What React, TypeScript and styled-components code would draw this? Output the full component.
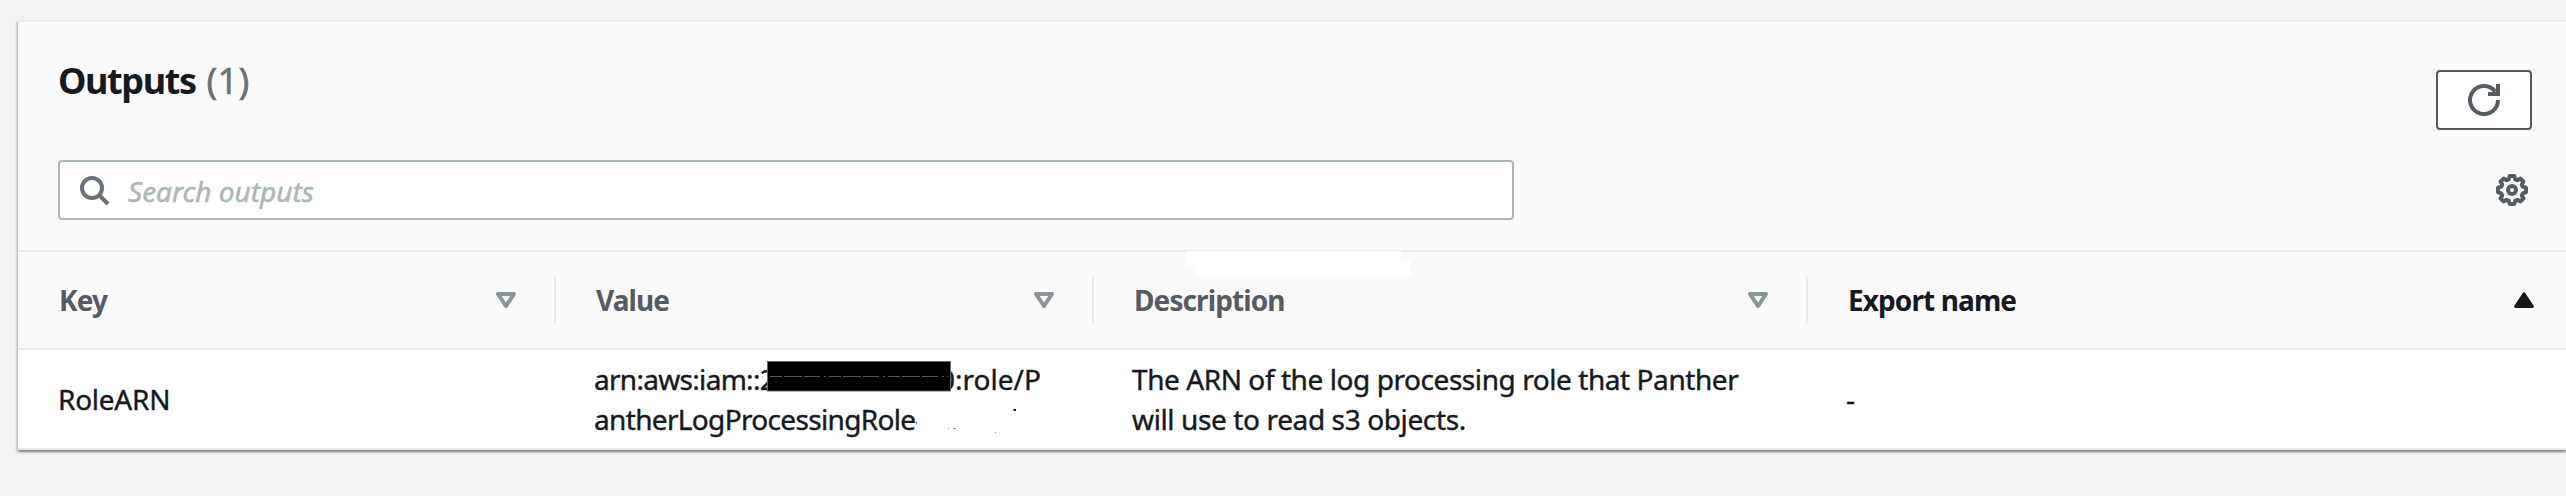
import React from 'react';
import styled, { createGlobalStyle } from 'styled-components';

const GlobalStyle = createGlobalStyle`
  * { box-sizing: border-box; }
  body {
    margin: 0;
    background: #f1f3f3;
    color: #16191f;
    font-family: 'Noto Sans', sans-serif;
    font-size: 28px;
    line-height: 40px;
    overflow: hidden;
  }
`;

const Page = styled.main`
  height: 496px;
  padding: 20px 0 0 18px;
  background: #f1f3f3;
  overflow: hidden;
`;

const Panel = styled.section`
  border-top: 2px solid #eaeded;
  background: #fff;
  box-shadow:
    0 2px 2px 0 rgba(0, 28, 36, 0.3),
    2px 2px 2px 0 rgba(0, 28, 36, 0.15),
    -2px 2px 2px 0 rgba(0, 28, 36, 0.15);
`;

const PanelHeader = styled.header`
  height: 230px;
  padding: 36px 34px 30px 40px;
  background: #fafafa;
  border-bottom: 2px solid #ebebeb;
`;

const TitleRow = styled.div`
  display: flex;
  justify-content: space-between;
  height: 102px;
`;

const Title = styled.h2`
  margin: 0;
  padding-top: 1px;
  font-size: 36px;
  line-height: 44px;
  font-weight: 700;
  letter-spacing: -1.4px;
`;

const Count = styled.span`
  font-weight: 400;
  letter-spacing: 0.3px;
  color: #687078;
  margin-left: 3px;
  -webkit-text-stroke: 0.5px;
`;

const RefreshButton = styled.button`
  display: flex;
  align-items: center;
  justify-content: center;
  width: 96px;
  height: 60px;
  margin-top: 12px;
  padding: 0;
  border: 2px solid #545b64;
  border-radius: 4px;
  background: #fff;
`;

const ToolRow = styled.div`
  display: flex;
  align-items: center;
  justify-content: space-between;
  height: 60px;
  padding-right: 4px;
`;

const SearchBox = styled.label`
  display: flex;
  align-items: center;
  width: 1456px;
  height: 60px;
  padding-left: 20px;
  gap: 16px;
  border: 2px solid #aab7b8;
  border-radius: 4px;
  background: #fff;
`;

const Placeholder = styled.span`
  color: #aab7b8;
  font-style: italic;
  padding-top: 1px;
  -webkit-text-stroke: 0.5px;
`;

const Grid = styled.div`
  display: grid;
  grid-template-columns: 538px 538px 714px 1fr;
`;

const HeadRow = styled(Grid)`
  height: 98px;
  background: #fafafa;
  border-bottom: 2px solid #ebebeb;
`;

const HeadCell = styled.div<{ $first?: boolean; $active?: boolean }>`
  position: relative;
  display: flex;
  align-items: center;
  padding-left: ${(p) => (p.$first ? '41px' : '40px')};
  padding-right: ${(p) => (p.$active ? '32px' : '0')};
  color: ${(p) => (p.$active ? '#16191f' : '#545b64')};
`;

const HeadLabel = styled.span`
  flex: 1;
  padding-bottom: 1px;
  font-weight: 700;
  letter-spacing: -0.9px;
`;

const Separator = styled.i`
  width: 2px;
  height: 48px;
  margin-left: 38px;
  background: #ebebeb;
`;

const PatchUpper = styled.span`
  position: absolute;
  left: 92px;
  top: -1px;
  width: 215px;
  height: 15px;
  background: #fff;
`;

const PatchLower = styled(PatchUpper)`
  left: 102px;
  top: 9px;
`;

const BodyRow = styled(Grid)`
  height: 100px;
  border-bottom: 2px solid #ebebeb;
`;

const Cell = styled.div<{ $first?: boolean }>`
  position: relative;
  display: flex;
  flex-direction: column;
  justify-content: center;
  padding-left: ${(p) => (p.$first ? '40px' : '38px')};
  white-space: nowrap;
  -webkit-text-stroke: 0.4px;
`;

const Line = styled.span<{ $tracking: number }>`
  display: block;
  letter-spacing: ${(p) => p.$tracking}px;
`;

const ArnLine = styled.span`
  display: flex;
`;

const ArnStart = styled.span`
  width: 345px;
  letter-spacing: -0.7px;
`;

const Redaction = styled.svg`
  position: absolute;
  left: 211px;
  top: 11px;
`;

const Specks = styled.svg`
  position: absolute;
  left: 356px;
  top: 56px;
`;

const SearchIcon = () => (
  <svg width="32" height="32" viewBox="0 0 32 32" fill="none" stroke="#687078" strokeWidth="4">
    <circle cx="12" cy="14" r="10" />
    <path d="M19 21 28 30" />
  </svg>
);

const RefreshIcon = () => (
  <svg width="32" height="32" viewBox="0 0 32 32" fill="none" stroke="#545b64" strokeWidth="4">
    <path d="M30 16A14 14 0 1 1 27.2 7.6" />
    <path d="M20 10H30V0" />
  </svg>
);

const GearIcon = () => (
  <svg width="32" height="32" viewBox="0 0 32 32" fill="none" stroke="#545b64" strokeWidth="4" strokeLinejoin="round">
    <path d="M13.7 2h4.6l1 3.3 2.2.9L24.5 4.6 27.500 7.600 25.800 10.500 26.700 12.700 30 13.700v4.600l-3.300 1-.9 2.200 1.700 2.900-3 3-3-1.600-2.200.9-1 3.300h-4.600l-1-3.300-2.200-.9-3 1.600-3-3 1.700-2.900-.9-2.200-3.300-1v-4.600l3.300-1 .9-2.200-1.700-2.900 3-3 3 1.600 2.200-.9z" />
    <circle cx="16" cy="16" r="4" />
  </svg>
);

const SortIcon = () => (
  <svg width="20" height="16" viewBox="0 0 20 16" fill="none" stroke="#879596" strokeWidth="4" strokeLinejoin="round">
    <path d="M2 2H18L10 14Z" />
  </svg>
);

const SortedIcon = () => (
  <svg width="20" height="16" viewBox="0 0 20 16" fill="#16191f" stroke="#16191f" strokeWidth="3" strokeLinejoin="round">
    <path d="M1.600 14.500H18.400L10 1.800Z" />
  </svg>
);

export default function App() {
  return (
    <Page>
      <GlobalStyle />
      <Panel>
        <PanelHeader>
          <TitleRow>
            <Title>
              Outputs <Count>(1)</Count>
            </Title>
            <RefreshButton aria-label="Refresh">
              <RefreshIcon />
            </RefreshButton>
          </TitleRow>
          <ToolRow>
            <SearchBox>
              <SearchIcon />
              <Placeholder>Search outputs</Placeholder>
            </SearchBox>
            <GearIcon />
          </ToolRow>
        </PanelHeader>
        <HeadRow>
          {['Key', 'Value', 'Description'].map((label) => (
            <HeadCell key={label} $first={label === 'Key'}>
              <HeadLabel>{label}</HeadLabel>
              <SortIcon />
              <Separator />
              {label === 'Description' && (
                <>
                  <PatchUpper />
                  <PatchLower />
                </>
              )}
            </HeadCell>
          ))}
          <HeadCell $active>
            <HeadLabel>Export name</HeadLabel>
            <SortedIcon />
          </HeadCell>
        </HeadRow>
        <BodyRow>
          <Cell $first>
            <Line $tracking={-0.25}>RoleARN</Line>
          </Cell>
          <Cell>
            <ArnLine>
              <ArnStart>arn:aws:iam::2</ArnStart>
              <span>0:role/P</span>
            </ArnLine>
            <Line $tracking={-0.66}>antherLogProcessingRole</Line>
            <Redaction width="184" height="31" viewBox="0 0 184 31">
              <rect x="0.500" y="0.500" width="183" height="29.500" fill="#000" stroke="#666" />
              <path d="M3 15.500H181" stroke="#555" strokeDasharray="12 2 18 2 16 4 2 3" />
            </Redaction>
            <Specks width="110" height="28" viewBox="0 0 110 28" fill="#16191f">
              <path d="M4 15.500h1v3h-1z" opacity=".6" />
              <path d="M36 22h1v1h-1zM41 22h3v1h-3zM83 26h1v1h-1z" opacity=".5" />
              <path d="M101 3h3v2h-2z" />
            </Specks>
          </Cell>
          <Cell>
            <Line $tracking={-0.43}>The ARN of the log processing role that Panther</Line>
            <Line $tracking={-0.38}>will use to read s3 objects.</Line>
          </Cell>
          <Cell>
            <Line $tracking={0}>-</Line>
          </Cell>
        </BodyRow>
      </Panel>
    </Page>
  );
}
